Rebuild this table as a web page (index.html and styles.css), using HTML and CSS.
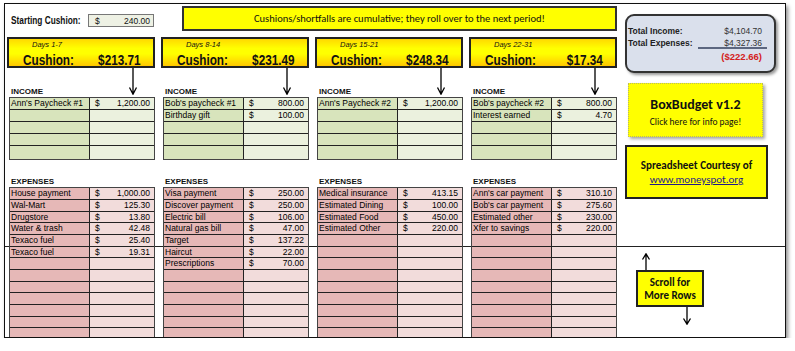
FILE: index.html
```html
<!DOCTYPE html>
<html>
<head>
<meta charset="utf-8">
<link rel="stylesheet" href="styles.css">
</head>
<body>
<div class="frame">
  <div class="main">
    <div class="top">
      <div class="start">
        <span class="start-lbl"><span class="narrow">Starting Cushion:</span></span>
        <div class="start-box"><span>$</span><span>240.00</span></div>
      </div>
      <div class="banner">Cushions/shortfalls are cumulative; they roll over to the next period!</div>
    </div>
    <div class="periods">
      <section class="period">
        <div class="cush"><div class="days">Days 1-7</div><div class="cline"><span class="cl">Cushion:</span><span class="cv">$213.71</span></div></div>
        <div class="inc-head"><span class="lbl">INCOME</span><svg class="arrow" width="10" height="27" viewBox="0 0 10 27"><path d="M5 0V26M1.5 19.5L5 26.2L8.5 19.5" fill="none" stroke="#000" stroke-width="1.3"/></svg></div>
        <div class="tbl inc">
          <div class="row"><div class="c1">Ann's Paycheck #1</div><div class="c2"><span>$</span><span>1,200.00</span></div></div>
          <div class="row"><div class="c1"></div><div class="c2"></div></div>
          <div class="row"><div class="c1"></div><div class="c2"></div></div>
          <div class="row"><div class="c1"></div><div class="c2"></div></div>
          <div class="row"><div class="c1"></div><div class="c2"></div></div>
        </div>
        <div class="exp-head"><span class="lbl">EXPENSES</span></div>
        <div class="tbl exp">
          <div class="row"><div class="c1">House payment</div><div class="c2"><span>$</span><span>1,000.00</span></div></div>
          <div class="row"><div class="c1">Wal-Mart</div><div class="c2"><span>$</span><span>125.30</span></div></div>
          <div class="row"><div class="c1">Drugstore</div><div class="c2"><span>$</span><span>13.80</span></div></div>
          <div class="row"><div class="c1">Water &amp; trash</div><div class="c2"><span>$</span><span>42.48</span></div></div>
          <div class="row"><div class="c1">Texaco fuel</div><div class="c2"><span>$</span><span>25.40</span></div></div>
          <div class="row"><div class="c1">Texaco fuel</div><div class="c2"><span>$</span><span>19.31</span></div></div>
          <div class="row"><div class="c1"></div><div class="c2"></div></div>
          <div class="row"><div class="c1"></div><div class="c2"></div></div>
          <div class="row"><div class="c1"></div><div class="c2"></div></div>
          <div class="row"><div class="c1"></div><div class="c2"></div></div>
          <div class="row"><div class="c1"></div><div class="c2"></div></div>
          <div class="row"><div class="c1"></div><div class="c2"></div></div>
          <div class="row"><div class="c1"></div><div class="c2"></div></div>
        </div>
      </section>
      <section class="period">
        <div class="cush"><div class="days">Days 8-14</div><div class="cline"><span class="cl">Cushion:</span><span class="cv">$231.49</span></div></div>
        <div class="inc-head"><span class="lbl">INCOME</span><svg class="arrow" width="10" height="27" viewBox="0 0 10 27"><path d="M5 0V26M1.5 19.5L5 26.2L8.5 19.5" fill="none" stroke="#000" stroke-width="1.3"/></svg></div>
        <div class="tbl inc">
          <div class="row"><div class="c1">Bob's paycheck #1</div><div class="c2"><span>$</span><span>800.00</span></div></div>
          <div class="row"><div class="c1">Birthday gift</div><div class="c2"><span>$</span><span>100.00</span></div></div>
          <div class="row"><div class="c1"></div><div class="c2"></div></div>
          <div class="row"><div class="c1"></div><div class="c2"></div></div>
          <div class="row"><div class="c1"></div><div class="c2"></div></div>
        </div>
        <div class="exp-head"><span class="lbl">EXPENSES</span></div>
        <div class="tbl exp">
          <div class="row"><div class="c1">Visa payment</div><div class="c2"><span>$</span><span>250.00</span></div></div>
          <div class="row"><div class="c1">Discover payment</div><div class="c2"><span>$</span><span>250.00</span></div></div>
          <div class="row"><div class="c1">Electric bill</div><div class="c2"><span>$</span><span>106.00</span></div></div>
          <div class="row"><div class="c1">Natural gas bill</div><div class="c2"><span>$</span><span>47.00</span></div></div>
          <div class="row"><div class="c1">Target</div><div class="c2"><span>$</span><span>137.22</span></div></div>
          <div class="row"><div class="c1">Haircut</div><div class="c2"><span>$</span><span>22.00</span></div></div>
          <div class="row"><div class="c1">Prescriptions</div><div class="c2"><span>$</span><span>70.00</span></div></div>
          <div class="row"><div class="c1"></div><div class="c2"></div></div>
          <div class="row"><div class="c1"></div><div class="c2"></div></div>
          <div class="row"><div class="c1"></div><div class="c2"></div></div>
          <div class="row"><div class="c1"></div><div class="c2"></div></div>
          <div class="row"><div class="c1"></div><div class="c2"></div></div>
          <div class="row"><div class="c1"></div><div class="c2"></div></div>
        </div>
      </section>
      <section class="period">
        <div class="cush"><div class="days">Days 15-21</div><div class="cline"><span class="cl">Cushion:</span><span class="cv">$248.34</span></div></div>
        <div class="inc-head"><span class="lbl">INCOME</span><svg class="arrow" width="10" height="27" viewBox="0 0 10 27"><path d="M5 0V26M1.5 19.5L5 26.2L8.5 19.5" fill="none" stroke="#000" stroke-width="1.3"/></svg></div>
        <div class="tbl inc">
          <div class="row"><div class="c1">Ann's Paycheck #2</div><div class="c2"><span>$</span><span>1,200.00</span></div></div>
          <div class="row"><div class="c1"></div><div class="c2"></div></div>
          <div class="row"><div class="c1"></div><div class="c2"></div></div>
          <div class="row"><div class="c1"></div><div class="c2"></div></div>
          <div class="row"><div class="c1"></div><div class="c2"></div></div>
        </div>
        <div class="exp-head"><span class="lbl">EXPENSES</span></div>
        <div class="tbl exp">
          <div class="row"><div class="c1">Medical insurance</div><div class="c2"><span>$</span><span>413.15</span></div></div>
          <div class="row"><div class="c1">Estimated Dining</div><div class="c2"><span>$</span><span>100.00</span></div></div>
          <div class="row"><div class="c1">Estimated Food</div><div class="c2"><span>$</span><span>450.00</span></div></div>
          <div class="row"><div class="c1">Estimated Other</div><div class="c2"><span>$</span><span>220.00</span></div></div>
          <div class="row"><div class="c1"></div><div class="c2"></div></div>
          <div class="row"><div class="c1"></div><div class="c2"></div></div>
          <div class="row"><div class="c1"></div><div class="c2"></div></div>
          <div class="row"><div class="c1"></div><div class="c2"></div></div>
          <div class="row"><div class="c1"></div><div class="c2"></div></div>
          <div class="row"><div class="c1"></div><div class="c2"></div></div>
          <div class="row"><div class="c1"></div><div class="c2"></div></div>
          <div class="row"><div class="c1"></div><div class="c2"></div></div>
          <div class="row"><div class="c1"></div><div class="c2"></div></div>
        </div>
      </section>
      <section class="period">
        <div class="cush"><div class="days">Days 22-31</div><div class="cline"><span class="cl">Cushion:</span><span class="cv">$17.34</span></div></div>
        <div class="inc-head"><span class="lbl">INCOME</span><svg class="arrow" width="10" height="27" viewBox="0 0 10 27"><path d="M5 0V26M1.5 19.5L5 26.2L8.5 19.5" fill="none" stroke="#000" stroke-width="1.3"/></svg></div>
        <div class="tbl inc">
          <div class="row"><div class="c1">Bob's paycheck #2</div><div class="c2"><span>$</span><span>800.00</span></div></div>
          <div class="row"><div class="c1">Interest earned</div><div class="c2"><span>$</span><span>4.70</span></div></div>
          <div class="row"><div class="c1"></div><div class="c2"></div></div>
          <div class="row"><div class="c1"></div><div class="c2"></div></div>
          <div class="row"><div class="c1"></div><div class="c2"></div></div>
        </div>
        <div class="exp-head"><span class="lbl">EXPENSES</span></div>
        <div class="tbl exp">
          <div class="row"><div class="c1">Ann's car payment</div><div class="c2"><span>$</span><span>310.10</span></div></div>
          <div class="row"><div class="c1">Bob's car payment</div><div class="c2"><span>$</span><span>275.60</span></div></div>
          <div class="row"><div class="c1">Estimated other</div><div class="c2"><span>$</span><span>230.00</span></div></div>
          <div class="row"><div class="c1">Xfer to savings</div><div class="c2"><span>$</span><span>220.00</span></div></div>
          <div class="row"><div class="c1"></div><div class="c2"></div></div>
          <div class="row"><div class="c1"></div><div class="c2"></div></div>
          <div class="row"><div class="c1"></div><div class="c2"></div></div>
          <div class="row"><div class="c1"></div><div class="c2"></div></div>
          <div class="row"><div class="c1"></div><div class="c2"></div></div>
          <div class="row"><div class="c1"></div><div class="c2"></div></div>
          <div class="row"><div class="c1"></div><div class="c2"></div></div>
          <div class="row"><div class="c1"></div><div class="c2"></div></div>
          <div class="row"><div class="c1"></div><div class="c2"></div></div>
        </div>
      </section>
    </div>
  </div>
  <aside class="side">
    <div class="totals">
      <span class="t-lbl">Total Income:</span><span class="t-amt">$4,104.70</span>
      <span class="t-lbl">Total Expenses:</span><span class="t-amt t-line">$4,327.36</span>
      <span class="t-lbl"></span><span class="t-amt t-neg">($222.66)</span>
    </div>
    <div class="bb">
      <div class="bb-title">BoxBudget v1.2</div>
      <div class="bb-sub">Click here for info page!</div>
    </div>
    <div class="court">
      <div class="court-t">Spreadsheet Courtesy of</div>
      <div class="court-l">www.moneyspot.org</div>
    </div>
    <div class="scroll">
      <svg class="arr-up" width="10" height="17" viewBox="0 0 10 17"><path d="M5 17V1M1.5 6.5L5 0.8L8.5 6.5" fill="none" stroke="#000" stroke-width="1.3"/></svg>
      <div class="scroll-box">Scroll for<br>More Rows</div>
      <svg class="arr-down" width="10" height="18" viewBox="0 0 10 18"><path d="M5 0V17M1.5 11.5L5 17.2L8.5 11.5" fill="none" stroke="#000" stroke-width="1.3"/></svg>
    </div>
  </aside>
</div>
</body>
</html>
```
FILE: styles.css
```css
html, body {
  margin: 0;
  background: #fff;
}
body {
  font-family: "Liberation Sans", Arial, sans-serif;
  color: #111;
}
.frame {
  margin: 3px 0 0 4px;
  width: 780px;
  height: 333px;
  border: 1px solid #111;
  display: flex;
  overflow: hidden;
  box-shadow: 2px 3px 4px rgba(0, 0, 0, 0.45);
  background: linear-gradient(to bottom, transparent 242px, #222 242px, #222 243px, transparent 243px);
}
.main {
  width: 612px;
  flex: none;
  padding-left: 4px;
  box-sizing: border-box;
}
.top {
  height: 33px;
  display: flex;
  align-items: flex-start;
}
.start {
  display: flex;
  align-items: center;
  margin: 10px 0 0 2px;
}
.start-lbl {
  width: 77px;
  white-space: nowrap;
  font: bold 10px "Liberation Sans", Arial, sans-serif;
  line-height: 13px;
}
.narrow {
  display: inline-block;
  transform: scaleX(0.83);
  transform-origin: left center;
}
.start-box {
  width: 66px;
  height: 13px;
  box-sizing: border-box;
  border: 1px solid #777;
  background: #eef1e4;
  display: flex;
  justify-content: space-between;
  align-items: center;
  padding: 0 3px 0 6px;
  font-size: 8.5px;
}
.banner {
  margin: 2px 0 0 28px;
  width: 435px;
  height: 25px;
  box-sizing: border-box;
  border: 2px solid #333;
  background: #ffff00;
  display: flex;
  align-items: center;
  justify-content: center;
  font: 10.5px Carlito, Lato, sans-serif;
}
.periods {
  display: flex;
  gap: 8px;
}
.period {
  width: 146px;
  flex: none;
}
.cush {
  height: 31px;
  margin-left: -2px;
  box-sizing: border-box;
  border: 2px solid #222;
  background: linear-gradient(180deg, #ffd900 0%, #ffff00 35%, #ffff00 55%, #ffc800 100%);
  padding: 0 12px 0 14px;
}
.days {
  font: italic 7.5px "Liberation Sans", Arial, sans-serif;
  line-height: 9px;
  margin-top: 1px;
  padding-left: 9px;
}
.cline {
  display: flex;
  justify-content: space-between;
  margin-top: 4px;
  font: bold 14px "Liberation Sans", Arial, sans-serif;
  line-height: 14px;
  white-space: nowrap;
}
.cl, .cv {
  display: inline-block;
  transform: scaleX(0.84);
}
.cl {
  transform-origin: left center;
}
.cv {
  transform-origin: right center;
}
.inc-head {
  height: 29px;
  display: flex;
  justify-content: space-between;
  align-items: flex-end;
}
.exp-head {
  height: 27px;
  display: flex;
  align-items: flex-end;
}
.lbl {
  font-weight: bold;
  font-size: 8px;
  line-height: 9px;
  margin-left: 2px;
  padding-bottom: 1px;
}
.arrow {
  display: block;
  margin: 0 17px 2px 0;
}
.tbl {
  border: 1px solid #444;
}
.row {
  display: flex;
  height: 11px;
  border-bottom: 1px solid #222;
  font-size: 8.5px;
  line-height: 11px;
  color: #000;
}
.row:last-child {
  border-bottom: 0;
}
.inc .row:last-child {
  height: 13px;
}
.exp .row:nth-child(3n) {
  height: 10px;
}
.c1 {
  flex: none;
  width: 80px;
  border-right: 1px solid #222;
  padding-left: 1px;
  box-sizing: border-box;
  white-space: nowrap;
  overflow: hidden;
}
.c2 {
  flex: 1;
  display: flex;
  justify-content: space-between;
  padding: 0 4px 0 5px;
}
.inc .c1 { background: #d8e4bc; }
.inc .c2 { background: #ebf1de; }
.exp .c1 { background: #e6b8b7; }
.exp .c2 { background: #f2dcdb; }

.side {
  width: 168px;
  flex: none;
}
.totals {
  margin: 10px 0 0 8px;
  width: 151px;
  height: 59px;
  box-sizing: border-box;
  border: 2px solid #333;
  border-radius: 9px;
  background: #dae0ec;
  box-shadow: 2px 2px 3px rgba(0, 0, 0, 0.4);
  padding: 10px 7px 0 1px;
  display: grid;
  grid-template-columns: 1fr 69px;
  grid-template-rows: 11.5px 11.5px 11.5px;
  font-size: 8.5px;
  line-height: 11.5px;
}
.t-lbl {
  font-weight: bold;
  color: #222;
  white-space: nowrap;
}
.t-amt {
  text-align: right;
  padding-right: 5px;
  color: #333;
}
.t-line {
  border-bottom: 2px solid #5c6780;
}
.t-neg {
  color: #d42020;
  font-weight: bold;
  font-size: 9.5px;
  margin-top: 2px;
}
.bb {
  margin: 10px 0 0 11px;
  width: 135px;
  height: 54px;
  box-sizing: border-box;
  border: 1px dotted #b8b860;
  background: #ffff00;
  box-shadow: 2px 2px 3px rgba(0, 0, 0, 0.35);
  text-align: center;
  font-family: Carlito, Lato, sans-serif;
  padding-top: 13px;
}
.bb-title {
  font-weight: bold;
  font-size: 14px;
  line-height: 16px;
}
.bb-sub {
  font-size: 9.5px;
  line-height: 12px;
  margin-top: 3px;
}
.court {
  margin: 8px 0 0 8px;
  width: 143px;
  height: 54px;
  box-sizing: border-box;
  border: 2px solid #222;
  background: #ffff00;
  text-align: center;
  font-family: Carlito, Lato, sans-serif;
  font-size: 11px;
  line-height: 14px;
  padding-top: 12px;
}
.court-t {
  font-weight: bold;
}
.court-l {
  color: #1f1a8a;
  text-decoration: underline;
}
.scroll {
  margin: 54px 0 0 19px;
  width: 68px;
}
.arr-up {
  display: block;
  margin-left: 5px;
}
.arr-down {
  display: block;
  margin-left: 46px;
}
.scroll-box {
  height: 37px;
  box-sizing: border-box;
  border: 2px solid #222;
  background: #ffff00;
  text-align: center;
  font: bold 11px Carlito, Lato, sans-serif;
  line-height: 13px;
  padding-top: 4px;
}
```
